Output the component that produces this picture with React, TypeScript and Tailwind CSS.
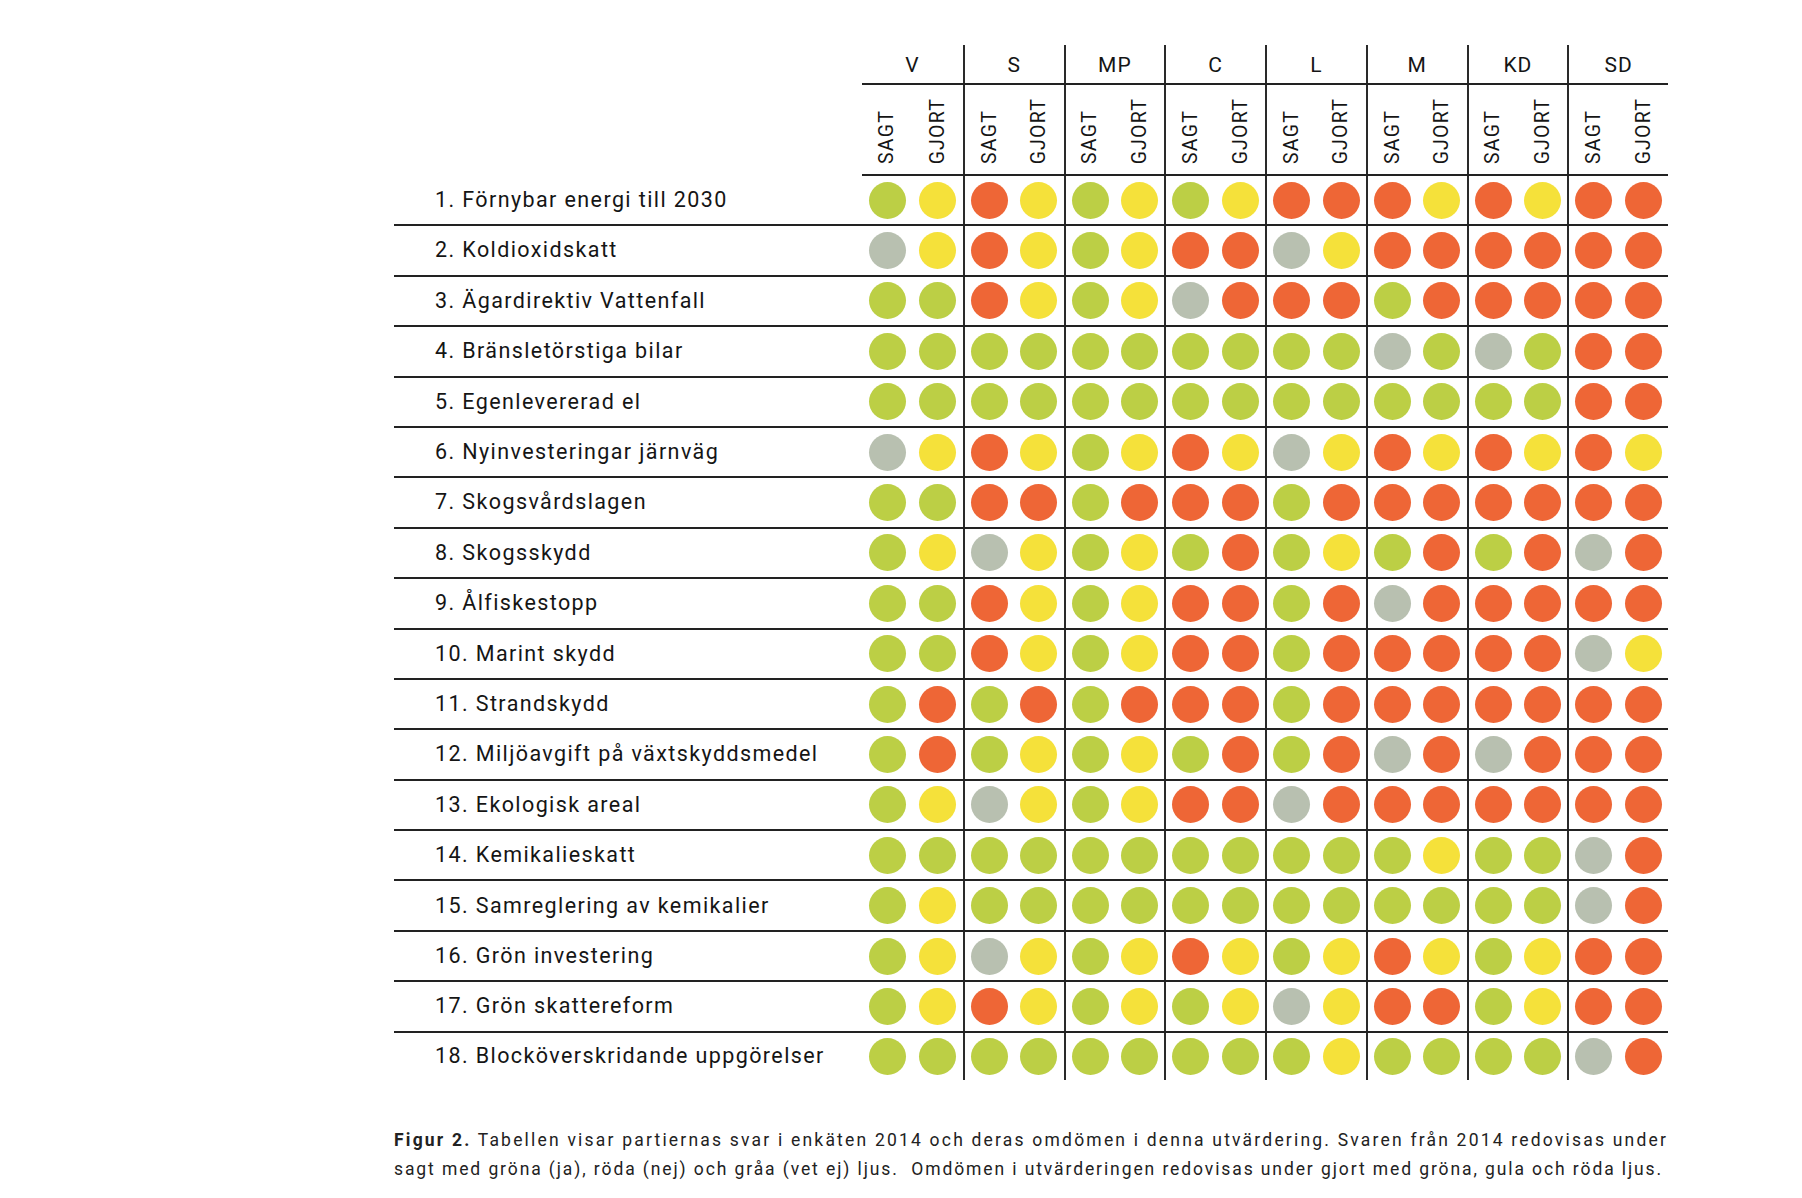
const parties = ["V", "S", "MP", "C", "L", "M", "KD", "SD"];

// g = grön (ja), r = röd (nej), x = grå (vet ej), y = gul
const rows: { label: string; cells: string }[] = [
  { label: "1. Förnybar energi till 2030", cells: "gyrygygyrrryryrr" },
  { label: "2. Koldioxidskatt", cells: "xyrygyrrxyrrrrrr" },
  { label: "3. Ägardirektiv Vattenfall", cells: "ggrygyxrrrgrrrrr" },
  { label: "4. Bränsletörstiga bilar", cells: "ggggggggggxgxgrr" },
  { label: "5. Egenlevererad el", cells: "ggggggggggggggrr" },
  { label: "6. Nyinvesteringar järnväg", cells: "xyrygyryxyryryry" },
  { label: "7. Skogsvårdslagen", cells: "ggrrgrrrgrrrrrrr" },
  { label: "8. Skogsskydd", cells: "gyxygygrgygrgrxr" },
  { label: "9. Ålfiskestopp", cells: "ggrygyrrgrxrrrrr" },
  { label: "10. Marint skydd", cells: "ggrygyrrgrrrrrxy" },
  { label: "11. Strandskydd", cells: "grgrgrrrgrrrrrrr" },
  { label: "12. Miljöavgift på växtskyddsmedel", cells: "grgygygrgrxrxrrr" },
  { label: "13. Ekologisk areal", cells: "gyxygyrrxrrrrrrr" },
  { label: "14. Kemikalieskatt", cells: "gggggggggggyggxr" },
  { label: "15. Samreglering av kemikalier", cells: "gyggggggggggggxr" },
  { label: "16. Grön investering", cells: "gyxygyrygyrygyrr" },
  { label: "17. Grön skattereform", cells: "gyrygygyxyrrgyrr" },
  { label: "18. Blocköverskridande uppgörelser", cells: "gggggggggyggggxr" },
];

const dotColor: Record<string, string> = {
  g: "bg-[#bccf45]",
  y: "bg-[#f5e13a]",
  r: "bg-[#ee6636]",
  x: "bg-[#b8c0b0]",
};

function Dot({ c }: { c: string }) {
  return (
    <div className="flex flex-1 items-center justify-center">
      <div className={`h-[37px] w-[37px] rounded-full ${dotColor[c]}`} />
    </div>
  );
}

export default function App() {
  return (
    <div className="min-h-[1198px] bg-white font-['Roboto',sans-serif] text-[#151515]">
      <div className="pl-[394px] pt-[45px]">
        {/* partinamn */}
        <div className="flex">
          <div className="w-[468px]" />
          <div className="grid w-[806px] grid-cols-8 border-b-2 border-[#222]">
            {parties.map((p, i) => (
              <div
                key={p}
                className={`flex h-[38px] items-center justify-center pt-[3px] text-[21px] tracking-[1px] ${i > 0 ? "border-l-2 border-[#2a2a2a]" : ""}`}
              >
                {p}
              </div>
            ))}
          </div>
        </div>

        {/* sagt / gjort */}
        <div className="flex">
          <div className="w-[468px]" />
          <div className="grid w-[806px] grid-cols-8 border-b-2 border-[#222]">
            {parties.map((p, i) => (
              <div
                key={p}
                className={`flex h-[89px] items-end pb-[10px] ${i > 0 ? "border-l-2 border-[#2a2a2a]" : ""}`}
              >
                {["SAGT", "GJORT"].map((t) => (
                  <div key={t} className="flex flex-1 justify-center">
                    <span className="rotate-180 text-[19.5px] leading-none tracking-[1.2px] [writing-mode:vertical-rl]">
                      {t}
                    </span>
                  </div>
                ))}
              </div>
            ))}
          </div>
        </div>

        {/* rader */}
        {rows.map((row, r) => (
          <div key={row.label} className={`flex w-[1274px] ${r > 0 ? "border-t-2 border-[#222]" : ""}`}>
            <div className="flex w-[468px] items-center pl-[41px] text-[21.5px] tracking-[1.4px]">{row.label}</div>
            <div className="grid w-[806px] grid-cols-8">
              {parties.map((p, i) => (
                <div
                  key={p}
                  className={`flex ${r === rows.length - 1 ? "h-[47px]" : "h-[48.4px]"} ${i > 0 ? "border-l-2 border-[#2a2a2a]" : ""}`}
                >
                  <Dot c={row.cells[i * 2]} />
                  <Dot c={row.cells[i * 2 + 1]} />
                </div>
              ))}
            </div>
          </div>
        ))}

        <p className="mt-[46px] text-[17.5px] leading-[29px] text-[#222]">
          <span className="tracking-[2.2px]">
            <b>Figur 2.</b> Tabellen visar partiernas svar i enkäten 2014 och deras omdömen i denna utvärdering. Svaren från 2014 redovisas under
          </span>
          <br />
          <span className="tracking-[1.9px]">
            sagt med gröna (ja), röda (nej) och gråa (vet ej) ljus.&nbsp; Omdömen i utvärderingen redovisas under gjort med gröna, gula och röda ljus.
          </span>
        </p>
      </div>
    </div>
  );
}
